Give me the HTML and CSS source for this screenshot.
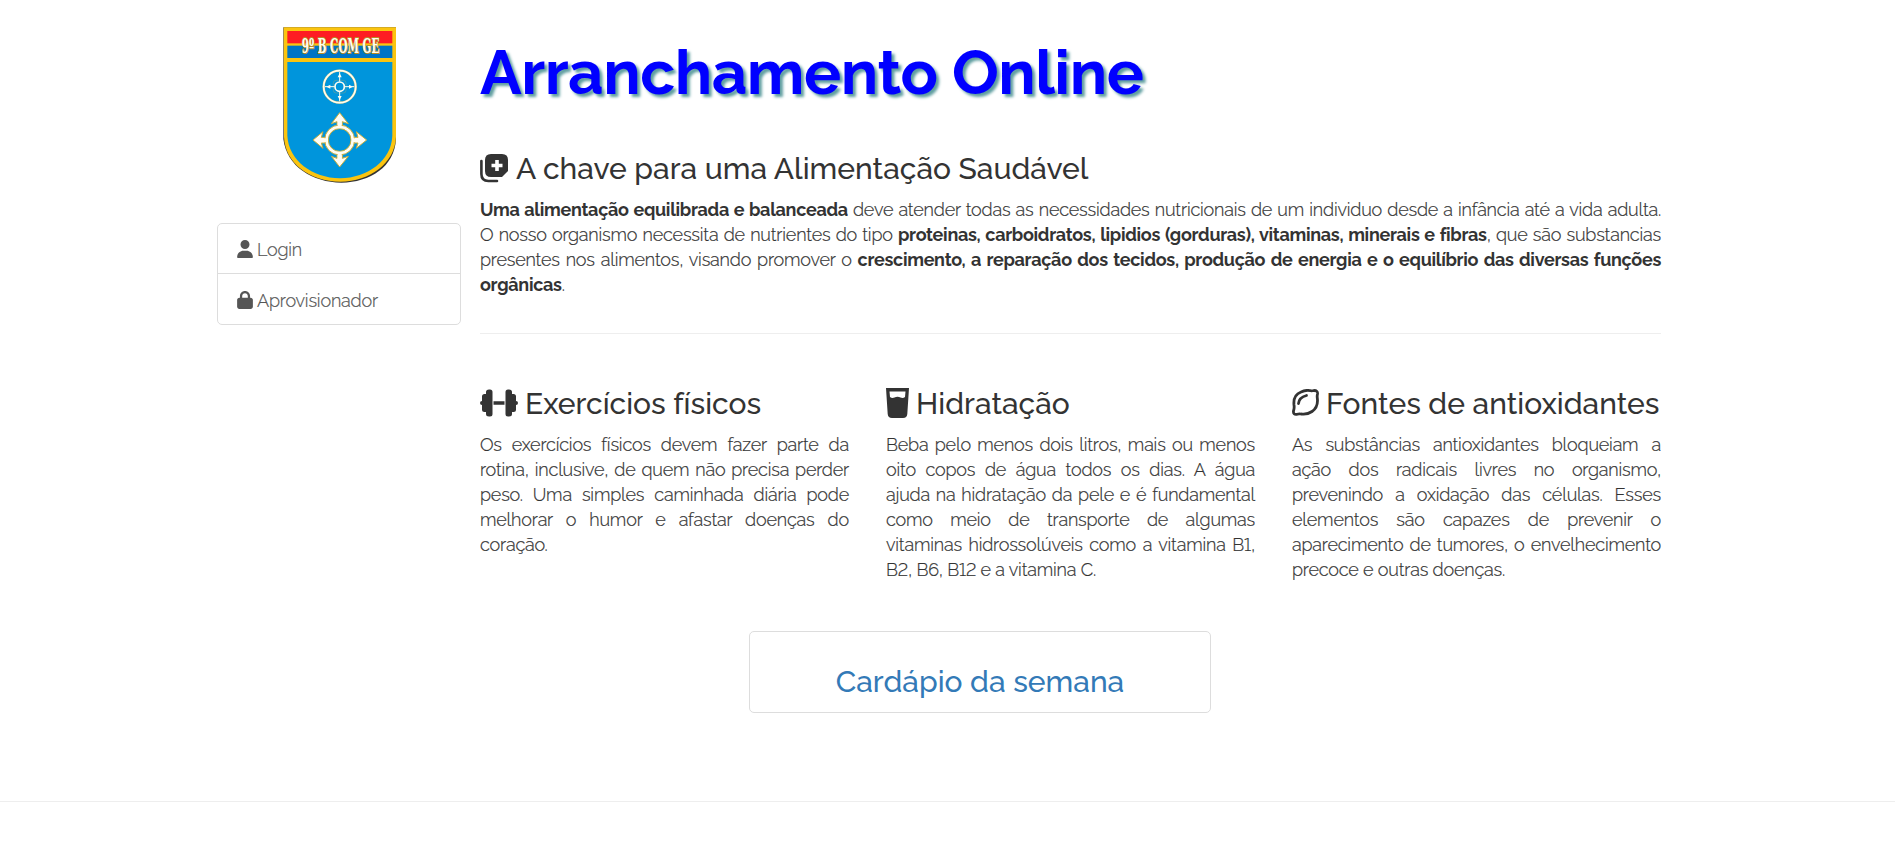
FILE: index.html
```html
<!DOCTYPE html>
<html lang="pt-BR">
<head>
<meta charset="utf-8">
<title>Arranchamento Online</title>
<link rel="stylesheet" href="styles.css">
</head>
<body>
<div class="container">
  <aside class="sidebar">
    <svg class="crest" width="140" height="180" viewBox="0 0 420 540">
      <path d="M40 37H378V372C374 455 300 502 214 503C128 502 50 455 40 372Z" fill="#333"/>
      <path d="M41 37H378V365C375 445 300 498 211 500C118 498 45 445 42 365Z" fill="#fbc40f"/>
      <path d="M52 141H367V362C364 437 293 488 210 490C126 488 56 437 52 362Z" fill="#0095dc"/>
      <rect x="52" y="48" width="315" height="37" fill="#fe1c23"/>
      <rect x="52" y="92" width="315" height="37" fill="#0074c4"/>
      <g transform="translate(95 114) scale(.62 1)"><text class="crest-halo" x="0" y="0" textLength="376" lengthAdjust="spacingAndGlyphs">9º B COM GE</text></g>
      <g fill="none" stroke="#fffdf0">
        <circle cx="209" cy="215" r="48" stroke="#cfc27a" stroke-width="7"/>
        <circle cx="209" cy="215" r="48" stroke-width="5"/>
        <circle cx="209" cy="215" r="14" stroke-width="5"/>
        <rect x="190" y="196" width="38" height="38" rx="8" stroke="#7fa58c" stroke-width="1.5"/>
        <path d="M209 171v29M209 230v29M165 215h29M224 215h29" stroke-width="3"/>
      </g>
      <path d="M203 187h12l-6-12zM203 243h12l-6 12zM181 209v12l-12-6zM237 209v12l12-6z" fill="#fffdf0"/>
      <g stroke="#c9ad3c" stroke-width="3" fill="#fffdf5">
        <path d="M209 293L235 326L217 320V337H201V320L184 326ZM209 456L235 424L217 430V413H201V430L184 424ZM129 375L159 350L154 367H172V384H154L159 400ZM290 375L259 350L264 367H246V384H264L259 400Z"/>
        <circle cx="209" cy="375" r="45"/>
        <circle cx="209" cy="375" r="34" fill="#0095dc"/>
      </g>
      <path d="M203 322h12v18h-12zM203 410h12v18h-12zM157 370h17v11h-17zM245 370h17v11h-17z" fill="#fffdf5"/>
    </svg>
    <nav class="list">
      <a class="item"><svg width="16" height="18" viewBox="0 0 448 512"><path d="M224 256A128 128 0 1 0 224 0a128 128 0 1 0 0 256zm-45.700 48C79.800 304 0 383.800 0 482.300C0 498.700 13.300 512 29.700 512H418.300c16.400 0 29.700-13.300 29.700-29.700C448 383.800 368.200 304 269.700 304H178.300z"/></svg><span>Login</span></a>
      <a class="item"><svg width="16" height="18" viewBox="0 0 448 512"><path d="M144 144v48H304V144c0-44.200-35.800-80-80-80s-80 35.800-80 80zM80 192V144C80 64.500 144.500 0 224 0s144 64.500 144 144v48h16c35.300 0 64 28.700 64 64V448c0 35.300-28.700 64-64 64H64c-35.300 0-64-28.700-64-64V256c0-35.300 28.700-64 64-64H80z"/></svg><span>Aprovisionador</span></a>
    </nav>
  </aside>
  <main class="main">
    <h1>Arranchamento Online</h1>
    <section class="intro">
      <h2><svg width="29" height="29" viewBox="0 0 29 29"><path d="M11 0H22Q28 0 28 6V17L22 23H11Q5 23 5 17V6Q5 0 11 0Z"/><path d="M15.200 6h3.600v3.700h3.700v3.600h-3.700V17h-3.600v-3.700h-3.700V9.700h3.700z" fill="#fff"/><path d="M1.400 7V20Q1.400 27 8.400 27H17" fill="none" stroke="#333" stroke-width="2.600" stroke-linecap="round"/></svg><span>A chave para uma Alimentação Saudável</span></h2>
      <p><b>Uma alimentação equilibrada e balanceada</b> deve atender todas as necessidades nutricionais de um individuo desde a infância até a vida adulta.<br>O nosso organismo necessita de nutrientes do tipo <b>proteinas, carboidratos, lipidios (gorduras), vitaminas, minerais e fibras</b>, que são substancias<br>presentes nos alimentos, visando promover o <b>crescimento, a reparação dos tecidos, produção de energia e o equilíbrio das diversas funções</b><br><span class="last"><b>orgânicas</b>.</span></p>
    </section>
    <div class="columns">
      <section>
        <h2><svg width="38" height="28" viewBox="0 0 38 28"><path d="M6 3Q6 .500 9 .500H10Q12.500 .500 12.500 3V25Q12.500 27.500 10 27.500H9Q6 27.500 6 25V23H4.500Q2 23 2 20.500V16Q0 16 0 14T2 12V7.500Q2 5 4.500 5H6ZM32 3Q32 .500 29 .500H28Q25.500 .500 25.500 3V25Q25.500 27.500 28 27.500H29Q32 27.500 32 25V23H33.500Q36 23 36 20.500V16Q38 16 38 14T36 12V7.500Q36 5 33.500 5H32ZM13.500 12.200H24.500V15.800H13.500Z"/></svg><span>Exercícios físicos</span></h2>
        <p>Os exercícios físicos devem fazer parte da<br>rotina, inclusive, de quem não precisa perder<br>peso. Uma simples caminhada diária pode<br>melhorar o humor e afastar doenças do<br><span class="last">coração.</span></p>
      </section>
      <section>
        <h2><svg width="23" height="30" viewBox="0 0 23 30"><path fill-rule="evenodd" d="M0 0H23L21.300 26Q21 30 17 30H6Q2 30 1.700 26ZM3.500 3.500L4 9Q6 10.500 8.500 9.500Q11.500 8 14.500 9.500Q17 10.500 19 9L19.500 3.500Z"/></svg><span>Hidratação</span></h2>
        <p>Beba pelo menos dois litros, mais ou menos<br>oito copos de água todos os dias. A água<br>ajuda na hidratação da pele e é fundamental<br>como meio de transporte de algumas<br>vitaminas hidrossolúveis como a vitamina B1,<br><span class="last">B2, B6, B12 e a vitamina C.</span></p>
      </section>
      <section>
        <h2><svg class="outline" width="27" height="27" viewBox="0 0 27 27"><path d="M2 16Q1 6 9 3Q14 .600 18.500 1.700Q20 2 22 1.500Q26 1.500 25.500 5Q25 7 25.300 9Q26.500 18 20 22.500Q15 26 9 25Q7 24.600 5 25.300Q1 26 1.500 22Q2.500 19 2 16Z"/><path d="M6.500 14.500Q7 8.500 14.500 6.500"/></svg><span>Fontes de antioxidantes</span></h2>
        <p>As substâncias antioxidantes bloqueiam a<br>ação dos radicais livres no organismo,<br>prevenindo a oxidação das células. Esses<br>elementos são capazes de prevenir o<br>aparecimento de tumores, o envelhecimento<br><span class="last">precoce e outras doenças.</span></p>
      </section>
    </div>
    <a class="card">Cardápio da semana</a>
  </main>
</div>
<hr class="footer-line">
</body>
</html>
```
FILE: styles.css
```css
*{box-sizing:border-box}
body{margin:0;background:#fff;color:#333;font-family:Raleway,Lato,sans-serif;font-size:18px;font-weight:300;line-height:25px;font-variant-numeric:lining-nums;letter-spacing:-.18px}
svg{flex:none;fill:#333}
.outline{fill:none;stroke:#333;stroke-width:2.8;stroke-linecap:round}
.container{display:flex;gap:19px;width:1444px;height:801px;margin-left:217px}
.sidebar{width:244px;padding-top:15px}
.crest{display:block;margin:0 0 28px 53px}
.crest-halo{font-family:"DejaVu Serif",serif;font-size:62px;font-weight:700;letter-spacing:0;fill:#fffdf0;stroke:#b98d22;stroke-width:6px;paint-order:stroke}
.list{border:1px solid #ddd;border-radius:5px;color:#555}
.item{display:flex;align-items:center;gap:4px;height:49px;padding:2px 19px 0;color:#555}
.item svg{margin-top:-1px;fill:#555}
.item span{-webkit-text-stroke:.2px #555}
.item+.item{height:51px;border-top:1px solid #ddd}
.main{width:1181px;padding-top:39px}
h1{margin:0 0 45px;color:#00f;font-size:62px;font-weight:700;line-height:68px;letter-spacing:-.46px;text-shadow:3px 3px 3px cadetblue}
h2{display:flex;align-items:center;gap:7px;margin:0;font-size:30px;font-weight:500;line-height:33px;letter-spacing:0;white-space:nowrap}
.columns h2 svg{margin-top:-2px}
p{margin:12px 0 0;white-space:nowrap;text-align:justify;text-align-last:justify;-webkit-text-stroke:.2px #333}
p .last{display:block;text-align:left;text-align-last:left}
.intro{height:182px;border-bottom:1px solid #eee}
.intro b{font-weight:700;letter-spacing:-.3px;-webkit-text-stroke:0}
.columns{display:grid;grid-template-columns:repeat(3,369px);gap:37px;height:297px;padding-top:53px}
.card{display:block;width:462px;height:82px;margin-left:269px;padding-top:33px;border:1px solid #ddd;border-radius:5px;color:#337ab7;font-size:30px;font-weight:500;line-height:33px;letter-spacing:0;text-align:center}
.footer-line{height:1px;margin:0;border:0;background:#eee}
```
